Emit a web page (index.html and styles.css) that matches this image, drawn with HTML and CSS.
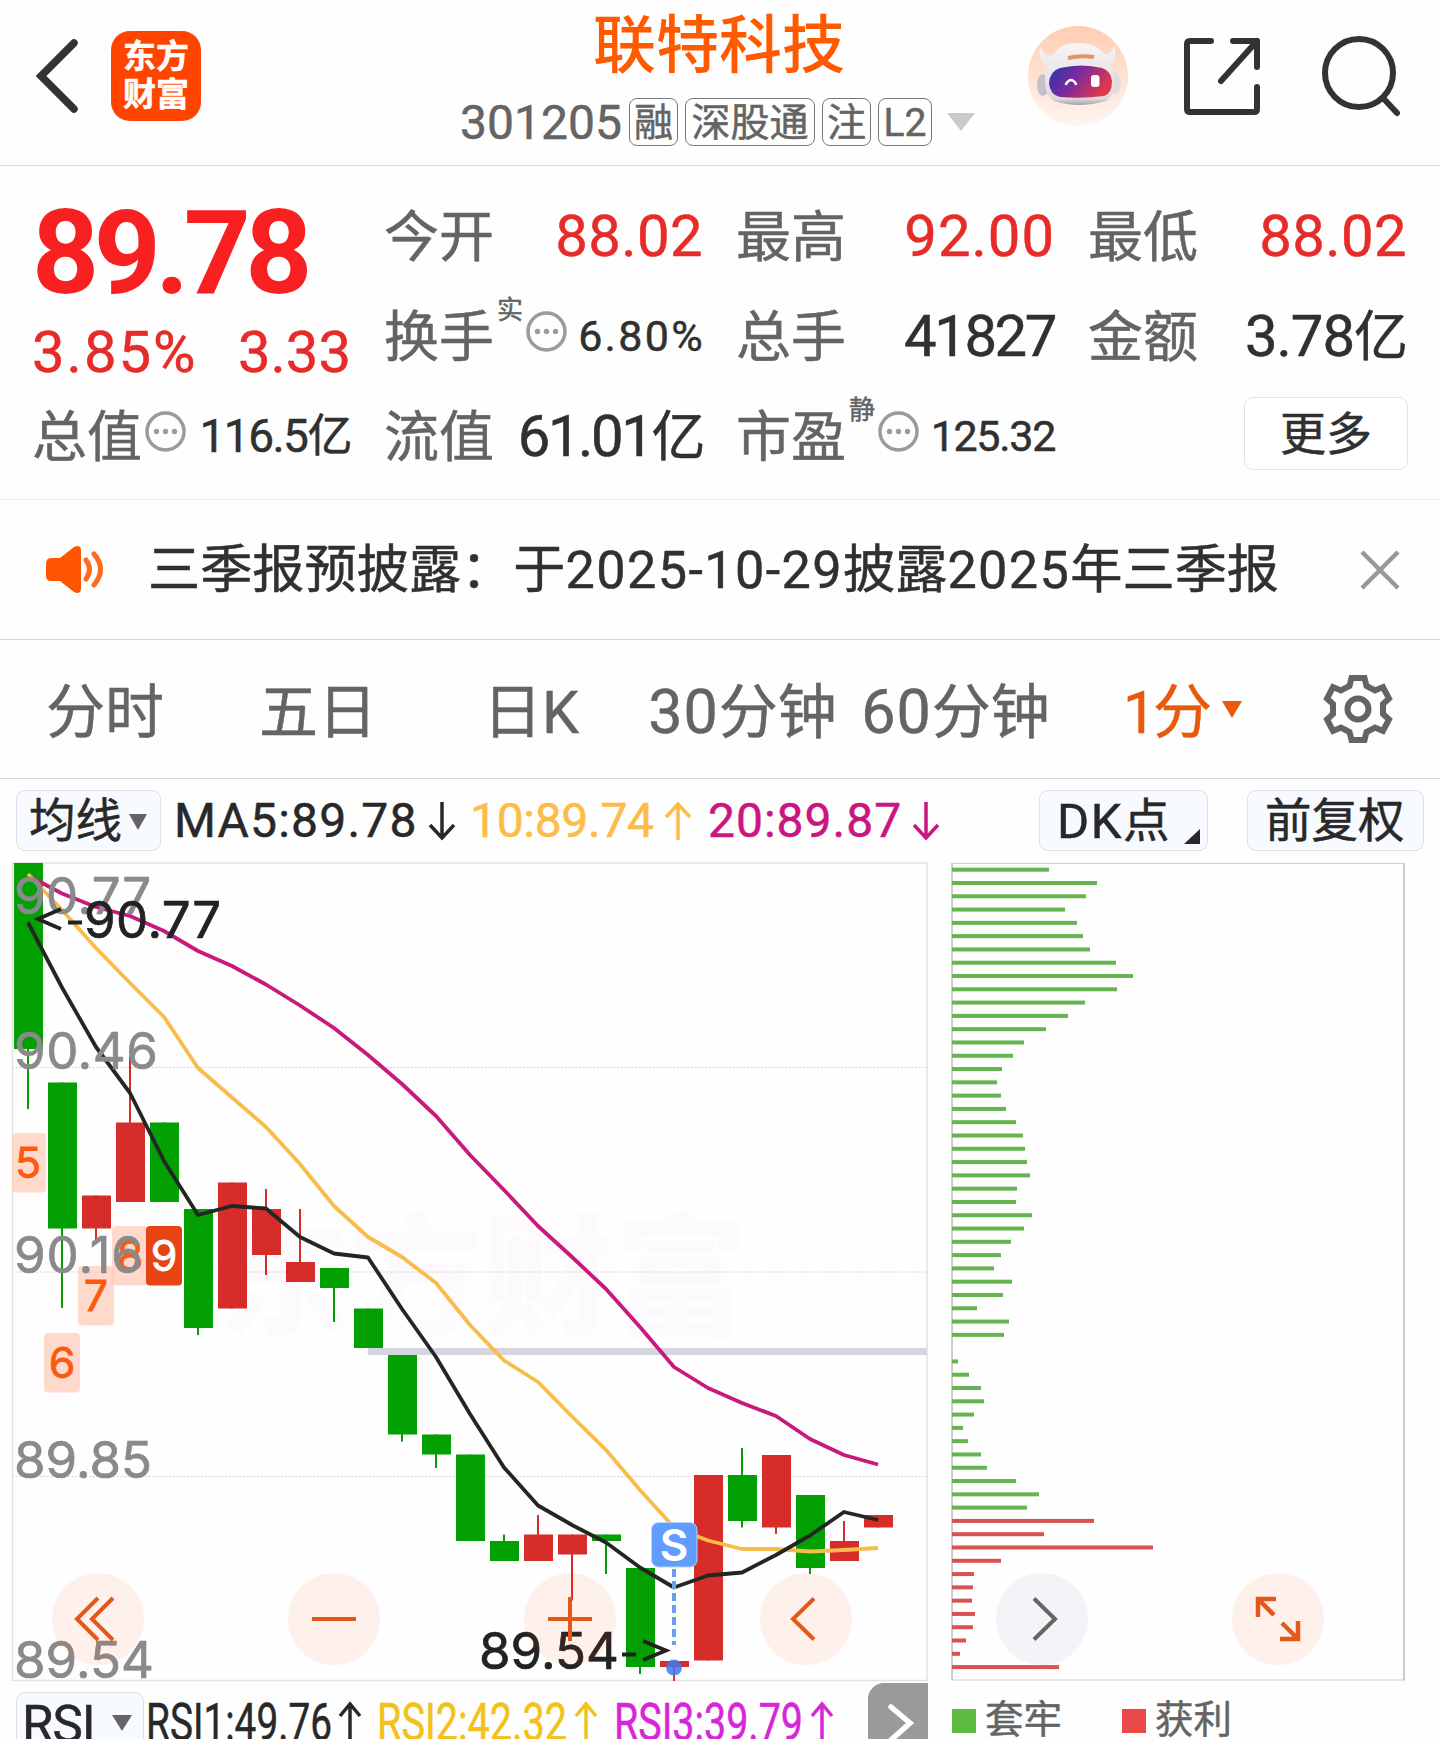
FILE: index.html
```html
<!DOCTYPE html>
<html lang="zh-CN">
<head>
    <meta charset="UTF-8">
    <meta name="viewport" content="width=device-width, initial-scale=1.0">
    <title>联特科技 301205</title>
    <link rel="stylesheet" href="styles.css">
</head>
<body>
    <header class="header">
        <div class="header-left">
            <svg class="back" width="46" height="76" viewBox="0 0 46 76"><path d="M39 5 L6 38 L39 71" fill="none" stroke="#333" stroke-width="7.500" stroke-linecap="round"/></svg>
            <div class="logo"><span>东方</span><span>财富</span></div>
        </div>
        <div class="title-box">
            <h1>联特科技</h1>
            <div class="sub">
                <span class="code">301205</span>
                <span class="tag">融</span>
                <span class="tag tag-sgt">深股通</span>
                <span class="tag">注</span>
                <span class="tag tag-l2">L2</span>
                <svg class="sub-arrow" width="30" height="20" viewBox="0 0 30 20"><path d="M1 1 H29 L15 19 Z" fill="#c9c9c9"/></svg>
            </div>
        </div>
        <div class="header-right">
            <svg width="100" height="100" viewBox="0 0 100 100">
                <defs>
                    <linearGradient id="skin" x1="0" y1="0" x2="0" y2="1"><stop offset="0" stop-color="#ffccb4"/><stop offset="1" stop-color="#fff6f2"/></linearGradient>
                    <linearGradient id="visor" x1="0" y1="0" x2="1" y2="0.4"><stop offset="0" stop-color="#2b35b0"/><stop offset="0.5" stop-color="#7a2a9c"/><stop offset="1" stop-color="#e0374d"/></linearGradient>
                    <linearGradient id="shell" x1="0" y1="0" x2="0" y2="1"><stop offset="0" stop-color="#f8f5f5"/><stop offset="0.5" stop-color="#e9e5e8"/><stop offset="0.9" stop-color="#dcd8dc"/><stop offset="1" stop-color="#a8a2a6"/></linearGradient>
                </defs>
                <circle cx="50" cy="50" r="50" fill="url(#skin)"/>
                <ellipse cx="15" cy="59" rx="6" ry="11" fill="#c3c0c8"/>
                <ellipse cx="87" cy="57" rx="6" ry="11" fill="#e3dcdf"/>
                <path d="M12 20 Q10 38 20 39 Q16 46 17 58 Q18 71 26 75 Q50 83 78 75 Q87 70 86 55 Q86 46 82 38 Q90 34 86 19 Q84 29 76 28 Q68 17 50 17 Q32 17 25 29 Q15 31 12 20 Z" fill="url(#shell)"/>
                <path d="M40 32 Q52 29 66 31" fill="none" stroke="#e0965c" stroke-width="4"/>
                <path d="M32 42 Q54 37 74 42 Q83 45 84 55 Q84 68 76 70 Q54 73 32 71 Q22 69 21 57 Q22 45 32 42 Z" fill="url(#visor)"/>
                <path d="M38 58 Q43 50 48 58" fill="none" stroke="#fff" stroke-width="2.500" stroke-linecap="round"/>
                <rect x="63" y="49" width="8.500" height="12" rx="3" fill="#fff"/>
            </svg>
            <svg width="80" height="80" viewBox="0 0 80 80" fill="none" stroke="#333" stroke-width="6" stroke-linecap="round" stroke-linejoin="round"><path d="M29 5 H8 Q5 5 5 8 V73 Q5 76 8 76 H72 Q75 76 75 73 V51"/><path d="M51 5 H75 V31"/><path d="M75 5 L39 45"/></svg>
            <svg width="82" height="82" viewBox="0 0 82 82" fill="none" stroke="#333" stroke-width="6" stroke-linecap="round"><circle cx="38" cy="38" r="34"/><path d="M63 64 L76 78"/></svg>
        </div>
    </header>

    <section class="quote">
        <div class="price-box">
            <div class="price">89.78</div>
            <div class="change"><span class="percent">3.85%</span><span>3.33</span></div>
        </div>
        <div class="cell"><span class="label">今开</span><span class="value up">88.02</span></div>
        <div class="cell"><span class="label">最高</span><span class="value up wide">92.00</span></div>
        <div class="cell"><span class="label">最低</span><span class="value up">88.02</span></div>
        <div class="cell"><span class="label">换手</span><span class="sup">实</span><svg class="dots" viewBox="0 0 41 41"><use href="#dots"/></svg><span class="value small rate">6.80%</span></div>
        <div class="cell"><span class="label">总手</span><span class="value tight">41827</span></div>
        <div class="cell"><span class="label">金额</span><span class="value amount">3.78<i>亿</i></span></div>
        <div class="cell"><span class="label">总值</span><svg class="dots" viewBox="0 0 41 41"><use href="#dots"/></svg><span class="value mid">116.5<i>亿</i></span></div>
        <div class="cell"><span class="label">流值</span><span class="value tight">61.01<i>亿</i></span></div>
        <div class="cell"><span class="label">市盈</span><span class="sup">静</span><svg class="dots" viewBox="0 0 41 41"><use href="#dots"/></svg><span class="value small">125.32</span></div>
        <div class="cell cell-more"><button class="more">更多</button></div>
    </section>

    <section class="notice">
        <svg class="horn" width="62" height="52" viewBox="0 0 62 52"><path d="M8 14 H17 L31 3 Q38 0 38 7 V44 Q38 51 31 48 L17 37 H8 Q3 37 3 31 V20 Q3 14 8 14 Z" fill="#ff5400"/><path d="M43 16 Q50 25 43 35 M51 10 Q64 25 51 41" fill="none" stroke="#ff6a1c" stroke-width="5" stroke-linecap="round"/></svg>
        <p>三季报预披露：于<span>2025-10-29</span>披露<span>2025</span>年三季报</p>
        <svg class="close" width="42" height="42" viewBox="0 0 42 42"><path d="M3 3 L39 39 M39 3 L3 39" stroke="#999" stroke-width="4.5"/></svg>
    </section>

    <nav class="tabs">
        <a>分时</a>
        <a>五日</a>
        <a>日K</a>
        <a class="minutes"><span>30</span>分钟</a>
        <a class="minutes"><span>60</span>分钟</a>
        <a class="active">1分<svg width="20" height="17" viewBox="0 0 20 17"><path d="M0 0 H20 L10 17 Z" fill="#e8590c"/></svg></a>
        <a class="setting"><svg width="70" height="72" viewBox="-35 -36 70 72" fill="none" stroke="#636463" stroke-width="6"><path d="M-6.500 -31 H6.500 L8.500 -23 L17 -18.500 L25 -22 L31 -10.500 L25 -5 V5 L31 10.500 L25 22 L17 18.500 L8.500 23 L6.500 31 H-6.500 L-8.500 23 L-17 18.500 L-25 22 L-31 10.500 L-25 5 V-5 L-31 -10.500 L-25 -22 L-17 -18.500 L-8.500 -23 Z"/><circle r="10.500"/></svg></a>
    </nav>

    <section class="indicator">
        <button class="pill">均线<svg width="18" height="16" viewBox="0 0 18 16"><path d="M0 0 H18 L9 16 Z" fill="#636463"/></svg></button>
        <span class="ma ma5"><b>MA5:89.78</b><svg class="arr down"><use href="#arrow"/></svg></span>
        <span class="ma ma10"><b>10:89.74</b><svg class="arr"><use href="#arrow"/></svg></span>
        <span class="ma ma20"><b>20:89.87</b><svg class="arr down"><use href="#arrow"/></svg></span>
        <button class="pill pill-dk"><span>DK</span>点<svg width="16" height="15" viewBox="0 0 16 15"><path d="M16 0 V15 H0 Z" fill="#282828"/></svg></button>
        <button class="pill pill-fq">前复权</button>
    </section>

    <main class="charts">
        <svg id="kline" width="940" height="820" viewBox="0 862 940 820"></svg>
        <svg id="chips" width="500" height="820" viewBox="940 862 500 820"></svg>
        <div class="tools">
            <button class="tool"><svg viewBox="-46 -46 92 92"><path d="M0 -21 L-21 0 L0 21 M15 -21 L-6 0 L15 21"/></svg></button>
            <button class="tool"><svg viewBox="-46 -46 92 92"><path d="M-22 0 H22"/></svg></button>
            <button class="tool"><svg viewBox="-46 -46 92 92"><path d="M-22 0 H22 M0 -22 V22"/></svg></button>
            <button class="tool"><svg viewBox="-46 -46 92 92"><path d="M8 -20.500 L-13 0 L8 20.500"/></svg></button>
            <button class="tool gray"><svg viewBox="-46 -46 92 92"><path d="M-8 -20.500 L13 0 L-8 20.500"/></svg></button>
            <button class="tool expand"><svg viewBox="-46 -46 92 92"><path d="M-2 -20 H-20 V-2 M-20 -20 L-4 -4 M20 2 V20 H2 M20 20 L4 4"/></svg></button>
        </div>
    </main>

    <footer class="bottom">
        <button class="pill pill-rsi">RSI<svg width="20" height="16" viewBox="0 0 20 16"><path d="M0 0 H20 L10 16 Z" fill="#636463"/></svg></button>
        <svg class="rsi" width="700" height="57" viewBox="144 1682 700 57">
            <text x="146" y="1740" textLength="186" lengthAdjust="spacingAndGlyphs" fill="#282828" stroke="#282828">RSI1:49.76</text>
            <text x="377" y="1740" textLength="190" lengthAdjust="spacingAndGlyphs" fill="#f2c21a" stroke="#f2c21a">RSI2:42.32</text>
            <text x="614" y="1740" textLength="189" lengthAdjust="spacingAndGlyphs" fill="#d726d7" stroke="#d726d7">RSI3:39.79</text>
            <path d="M350 1742 V1704 M340 1716 L350 1704 L360 1716" stroke="#282828"/>
            <path d="M586 1742 V1704 M576 1716 L586 1704 L596 1716" stroke="#f2c21a"/>
            <path d="M822 1742 V1704 M812 1716 L822 1704 L832 1716" stroke="#d726d7"/>
        </svg>
        <div class="next"><svg width="30" height="42" viewBox="0 0 30 42"><path d="M5 5 L24 21 L5 38" fill="none" stroke="#fff" stroke-width="5.500" stroke-linecap="round"/></svg></div>
        <div class="legend"><i class="lose"></i>套牢</div>
        <div class="legend"><i class="win"></i>获利</div>
    </footer>

    <svg class="symbols">
        <symbol id="dots" viewBox="0 0 41 41"><circle cx="20.500" cy="20.500" r="18.500" fill="none" stroke="#9d999d" stroke-width="3.500"/><circle cx="11.500" cy="20.500" r="2.700" fill="#9d999d"/><circle cx="20.500" cy="20.500" r="2.700" fill="#9d999d"/><circle cx="29.500" cy="20.500" r="2.700" fill="#9d999d"/></symbol>
        <symbol id="arrow" viewBox="0 0 28 40"><path d="M14 39 V3 M2 16 L14 3 L26 16" fill="none" stroke="currentColor" stroke-width="3.500"/></symbol>
    </svg>
    <script src="script.js"></script>
</body>
</html>
```
FILE: styles.css
```css
* {
    box-sizing: border-box;
}
body {
    margin: 0;
    width: 1440px;
    height: 1739px;
    overflow: hidden;
    background: #fefefe;
    color: #2f302f;
    font-family: Roboto, 'Noto Sans CJK SC', sans-serif;
    line-height: 1;
    -webkit-text-stroke: 0.5px currentColor;
}
svg {
    display: block;
    flex: none;
}
button {
    font-family: inherit;
    line-height: 1;
    padding: 0;
    border: none;
    color: inherit;
}
i {
    font-style: normal;
}
.symbols {
    display: none;
}

/* header */
.header {
    display: flex;
    justify-content: space-between;
    height: 166px;
    border-bottom: 1px solid #dcdcdc;
}
.header-left {
    display: flex;
    align-items: center;
    width: 460px;
    height: 152px;
    padding-left: 35px;
}
.logo {
    display: flex;
    flex-direction: column;
    justify-content: center;
    align-items: center;
    width: 90px;
    height: 90px;
    margin-left: 30px;
    border-radius: 19px;
    background: #ff4400;
    color: #fff;
    font-size: 33px;
    font-weight: 700;
    line-height: 38px;
}
.title-box {
    width: 520px;
}
h1 {
    margin: 13px 0 0;
    padding-left: 133px;
    font-size: 63px;
    font-weight: 500;
    line-height: 66px;
    color: #ff5a00;
    -webkit-text-stroke: 0;
}
.sub {
    display: flex;
    align-items: center;
    height: 48px;
    margin-top: 19px;
    color: #636463;
}
.code {
    width: 169px;
    padding-top: 1px;
    font-size: 48px;
}
.tag {
    height: 48px;
    margin-right: 7px;
    padding: 0 4px;
    border: 1.500px solid #777;
    border-radius: 8px;
    font-size: 39px;
    line-height: 48px;
}
.tag-sgt {
    padding: 0 5.500px;
}
.tag-l2 {
    padding: 0 4.500px;
}
.sub-arrow {
    margin-left: 7px;
}
.header-right {
    display: flex;
    align-items: center;
    width: 460px;
    height: 152px;
    padding-left: 48px;
}
.header-right svg:nth-child(2) {
    margin-left: 54px;
}
.header-right svg:nth-child(3) {
    margin-left: 59px;
}

/* quote panel */
.quote {
    display: grid;
    grid-template-columns: repeat(4, 317px);
    grid-template-rows: repeat(3, 100px);
    column-gap: 35px;
    height: 334px;
    padding: 20px 0 0 34px;
    border-bottom: 1px solid #ececec;
}
.price-box {
    grid-row: span 2;
}
.price {
    margin-left: -2px;
    font-size: 117px;
    font-weight: 700;
    line-height: 134px;
    letter-spacing: -5.500px;
    color: #f82020;
    -webkit-text-stroke: 0;
}
.change {
    display: flex;
    justify-content: space-between;
    margin-left: -2px;
    font-size: 58px;
    line-height: 64px;
    color: #e62b28;
}
.percent {
    letter-spacing: 2px;
}
.cell {
    display: flex;
    align-items: center;
    height: 100px;
    white-space: nowrap;
}
.label {
    margin-left: -2px;
    padding-top: 2px;
    font-size: 55px;
    color: #636463;
}
.sup {
    align-self: flex-start;
    margin: 7px 0 0 3px;
    font-size: 26px;
    line-height: 34px;
    color: #636463;
}
.dots {
    width: 41px;
    height: 41px;
    margin: -10px 0 0 3px;
}
.value {
    margin-left: auto;
    font-size: 58px;
}
.value i {
    font-size: 54px;
}
.value.up {
    color: #e62b28;
    letter-spacing: 0.4px;
}
.value.wide {
    letter-spacing: 1px;
}
.value.tight {
    letter-spacing: -2.400px;
}
.value.amount {
    letter-spacing: -1px;
}
.value.small {
    font-size: 43px;
    letter-spacing: -1.300px;
}
.value.rate {
    margin-right: -2px;
    letter-spacing: 2.300px;
}
.value.mid {
    font-size: 46px;
    letter-spacing: -1.5px;
}
.value.mid i {
    font-size: 45px;
}
.cell-more {
    justify-content: flex-end;
}
.more {
    width: 164px;
    height: 73px;
    margin-right: -1px;
    margin-top: -5px;
    border: 1.500px solid #e4e4e8;
    border-radius: 9px;
    background: #fff;
    font-size: 46px;
    line-height: 68px;
}

/* notice */
.notice {
    display: flex;
    align-items: center;
    height: 140px;
    padding: 0 39px 0 43px;
    border-bottom: 1.500px solid #d8d8da;
}
.notice p {
    flex: 1;
    margin: 0 0 0 43px;
    padding-top: 4px;
    font-size: 52.200px;
    white-space: nowrap;
}
.notice p span {
    letter-spacing: 1.400px;
}

/* period tabs */
.tabs {
    display: grid;
    grid-template-columns: repeat(6, 213px) 162px;
    height: 139px;
    border-bottom: 1.500px solid #d8d8da;
}
.tabs a {
    display: flex;
    align-items: center;
    justify-content: center;
    padding: 7px 3px 0 0;
    font-size: 59px;
    color: #636463;
}
.tabs a.minutes {
    padding-right: 6px;
}
.tabs a span {
    font-size: 61px;
    letter-spacing: 1px;
}
.tabs a.active {
    padding-left: 25px;
    letter-spacing: -3px;
    color: #e8590c;
}
.tabs a.active svg {
    margin: -7px 0 0 13px;
}
.tabs a.setting {
    padding-top: 0;
}

/* moving average row */
.indicator {
    display: flex;
    align-items: center;
    height: 83px;
    padding: 0 16px;
}
.pill {
    display: flex;
    align-items: center;
    width: 145px;
    height: 61px;
    padding: 2px 0 0 12px;
    border: 1.500px solid #dfdfe6;
    border-radius: 9px;
    background: #f7faff;
    color: #282828;
    font-size: 46.500px;
}
.pill svg {
    margin-left: 7px;
}
.ma {
    display: flex;
    align-items: center;
    font-size: 48px;
}
.ma b {
    font-weight: 400;
}
.arr {
    width: 28px;
    height: 40px;
}
.arr.down {
    transform: rotate(180deg);
}
.ma5 {
    width: 296px;
    margin-left: 13px;
    color: #282828;
}
.ma5 b {
    width: 254px;
    letter-spacing: 1.200px;
}
.ma10 {
    width: 238px;
    color: #fbbc48;
}
.ma10 b {
    width: 194px;
    letter-spacing: -0.3px;
}
.ma20 {
    color: #cc1480;
}
.ma20 b {
    width: 204px;
    letter-spacing: 1px;
}
.pill-dk {
    width: 169px;
    margin-left: auto;
    padding-left: 17px;
}
.pill-dk span {
    font-size: 49px;
    letter-spacing: 1.500px;
}
.pill-dk svg {
    margin: 29px 0 0 15px;
}
.pill-fq {
    width: 177px;
    margin-left: 39px;
    padding-left: 17px;
}

/* charts */
.charts {
    display: flex;
    position: relative;
    height: 820px;
}
.charts text {
    font-family: Inter, sans-serif;
}
.charts .watermark {
    font-family: 'Noto Sans CJK SC', sans-serif;
    font-size: 132px;
    font-weight: 900;
    fill: #fdfafd;
    -webkit-text-stroke: 0;
}
.tools {
    position: absolute;
    left: 52px;
    top: 711px;
    display: flex;
    gap: 144px;
}
.tool {
    width: 92px;
    height: 92px;
    border-radius: 50%;
    background: rgba(255, 90, 30, 0.08);
}
.tool svg {
    fill: none;
    stroke: #e2591a;
    stroke-width: 4;
}
.tool.expand svg {
    stroke-width: 4.500;
}
.tool.gray {
    background: rgba(100, 60, 130, 0.06);
}
.tool.gray svg {
    stroke: #636463;
}

/* bottom row */
.bottom {
    display: flex;
    height: 57px;
    padding-left: 16px;
    overflow: hidden;
}
.pill-rsi {
    width: 128px;
    height: 70px;
    margin-top: 10px;
    padding: 3px 0 0 5px;
    align-items: flex-start;
    font-size: 51px;
    line-height: 58px;
    letter-spacing: -1px;
}
.pill-rsi svg {
    margin: 19px 0 0 17px;
}
.rsi text {
    font-size: 52px;
    stroke-width: 0.5;
}
.rsi path {
    fill: none;
    stroke-width: 3.500;
}
.next {
    width: 60px;
    height: 70px;
    margin: 1px 24px 0 24px;
    padding: 19px 0 0 18px;
    border-top-left-radius: 16px;
    background: #9c999c;
}
.legend {
    display: flex;
    align-items: center;
    width: 170px;
    height: 77px;
    font-size: 38.500px;
    color: #636463;
}
.legend i {
    width: 24px;
    height: 24px;
    margin-right: 9px;
}
.lose {
    background: #5cb941;
}
.win {
    background: #ec4a4a;
}
```
FILE: script.js
```js
const GREEN = '#02a002';
const RED = '#d62c2a';
const STEP = 34;
const X0 = 28;

// [color, body top, body bottom, wick top, wick bottom]
const candles = [
    ['g', 863, 1049, 863, 1109],
    ['g', 1082.5, 1228.5, 1082.5, 1308],
    ['r', 1195.5, 1228.5, 1195.5, 1242],
    ['r', 1122.5, 1202, 1057, 1202],
    ['g', 1122.5, 1202, 1122.5, 1202],
    ['g', 1209, 1328, 1209, 1335],
    ['r', 1182.5, 1308.5, 1182.5, 1308.5],
    ['r', 1209, 1255, 1189, 1275],
    ['r', 1262, 1282, 1209, 1282],
    ['g', 1268, 1288, 1268, 1322],
    ['g', 1308.5, 1348, 1308.5, 1348],
    ['g', 1355, 1434.5, 1355, 1441.5],
    ['g', 1434.5, 1454.5, 1434.5, 1468],
    ['g', 1454.5, 1541, 1454.5, 1541],
    ['g', 1541, 1561, 1534.5, 1561],
    ['r', 1534.5, 1561, 1515, 1561],
    ['r', 1534.5, 1554.5, 1534.5, 1600.5],
    ['g', 1534.5, 1541, 1534.5, 1574],
    ['g', 1568, 1667, 1568, 1674],
    ['r', 1661, 1667, 1661, 1681],
    ['r', 1475, 1660.5, 1475, 1660.5],
    ['g', 1475, 1521, 1448, 1527.5],
    ['r', 1455, 1527.5, 1455, 1534],
    ['g', 1495, 1568, 1495, 1574],
    ['r', 1541, 1561, 1521, 1561],
    ['r', 1515, 1527.5, 1515, 1527.5]
];

const ma5 = [922.5, 987.5, 1047, 1093, 1161, 1215, 1206, 1208.5, 1237, 1253.5, 1257.5, 1309, 1357, 1414, 1467.5, 1505.5, 1525, 1542.5, 1567.5, 1587.5, 1575.5, 1572.5, 1555, 1535.5, 1512, 1520];
const ma10 = [874, 910, 948, 983, 1017, 1068, 1097.5, 1127, 1164, 1206, 1237, 1257, 1283, 1325, 1360.5, 1382, 1416.5, 1450, 1490, 1527.5, 1540.5, 1549, 1549, 1551.5, 1550, 1548];
const ma20 = [875.5, 893.5, 907, 916, 931, 951, 966, 984.5, 1005.5, 1028, 1055, 1084, 1116, 1155, 1190, 1226, 1257, 1289, 1327, 1367, 1388, 1403, 1416, 1439, 1455, 1464.5];

// [digit, x, y]
const counts = [['5', 10, 1133], ['6', 44, 1333], ['7', 78, 1266], ['8', 112, 1226], ['9', 146, 1226]];

function line(values, color) {
    const pts = values.map((y, i) => (X0 + i * STEP) + ',' + y).join(' ');
    return `<polyline points="${pts}" fill="none" stroke="${color}" stroke-width="3.8" stroke-linejoin="round"/>`;
}

function label(text, x, y, w, color) {
    return `<text x="${x}" y="${y}" font-size="51" textLength="${w}" fill="${color}" stroke="${color}" stroke-width="0.7">${text}</text>`;
}

function drawKline() {
    let s = '<text class="watermark" x="218" y="1325">东方财富</text>';
    [1067.5, 1272, 1476.5].forEach(y => {
        s += `<path d="M12 ${y} H927" stroke="#d4d4d8" stroke-width="1" stroke-dasharray="2 1.500"/>`;
    });
    s += '<rect x="12.500" y="863" width="914.500" height="817.500" fill="none" stroke="#e2e2e4" stroke-width="1.500"/>';
    s += '<rect x="368" y="1348" width="559" height="7" fill="#d4d5de"/>';
    candles.forEach((c, i) => {
        const x = X0 + i * STEP;
        const color = c[0] === 'g' ? GREEN : RED;
        s += `<rect x="${x - 1}" y="${c[3]}" width="2" height="${c[4] - c[3]}" fill="${color}"/>`;
        s += `<rect x="${x - 14}" y="${c[1]}" width="29" height="${c[2] - c[1]}" fill="${color}"/>`;
    });
    counts.forEach(c => {
        const last = c[0] === '9';
        const left = Math.max(c[1], 12);
        const color = last ? '#fff' : '#f95c10';
        s += `<rect x="${left}" y="${c[2]}" width="${c[1] + 36 - left}" height="59.500" rx="4" fill="${last ? '#e64413' : '#ffc9b6'}" fill-opacity="${last ? 1 : 0.7}"/>`;
        s += `<text x="${c[1] + 18}" y="${c[2] + 45}" font-size="43" text-anchor="middle" fill="${color}" stroke="${color}" stroke-width="0.8">${c[0]}</text>`;
    });
    s += line(ma20, '#c71a7c') + line(ma10, '#f8bc4a') + line(ma5, '#242624');
    s += label('90.77', 14, 914, 137, '#8a898b');
    s += label('90.46', 14, 1068.5, 144, '#8a898b');
    s += label('90.16', 14, 1272.5, 129, '#8a898b');
    s += label('89.85', 14, 1477.5, 138, '#8a898b');
    s += label('89.54', 14, 1677.5, 140, '#8a898b');
    s += label('90.77', 84, 937.5, 137, '#222') + label('89.54', 479, 1669, 140, '#222');
    s += '<path d="M61 909 L38 919 L61 929 M68 922.500 H82 M622 1654.500 H636 M643 1641 L666 1650.500 L643 1660" fill="none" stroke="#222" stroke-width="3.800"/>';
    // sell marker
    s += '<path d="M674 1569 V1645" stroke="#66a0ea" stroke-width="4" stroke-dasharray="8 4"/>';
    s += '<circle cx="674" cy="1667.500" r="8" fill="#3f78ee" fill-opacity="0.850"/>';
    s += '<rect x="651.500" y="1522.500" width="45.500" height="44.500" rx="7" fill="#619cff" stroke="#b8d3ff" stroke-width="1"/>';
    s += '<text x="674" y="1560.500" font-size="44" font-weight="600" text-anchor="middle" fill="#fff">S</text>';
    document.getElementById('kline').innerHTML = s;
}

const trapped = [97, 145, 134, 113, 125, 131, 138, 164, 181, 165, 133, 116, 94, 72, 61, 50, 45, 49, 54, 64, 71, 73, 75, 78, 65, 64, 80, 72, 59, 49, 42, 60, 51, 25, 57, 52, 0, 6, 17, 29, 32, 22, 11, 16, 29, 35, 64, 87, 75];
const profit = [142, 92, 201, 49, 22, 21, 20, 23, 21, 14, 8, 107];

function drawChips() {
    let s = '<path d="M952 863.500 H1404 M952 1680 H1404" stroke="#cfcfcf" stroke-width="1"/>';
    s += '<path d="M952 863 V1680.500 M1404 863 V1680.500" stroke="#cccccc" stroke-width="2"/>';
    trapped.concat(profit).forEach((w, i) => {
        const y = 867.7 + i * 13.29;
        s += `<rect x="952" y="${y}" width="${w}" height="4" fill="${i < trapped.length ? '#64b450' : '#d85252'}"/>`;
    });
    document.getElementById('chips').innerHTML = s;
}

drawKline();
drawChips();
```
